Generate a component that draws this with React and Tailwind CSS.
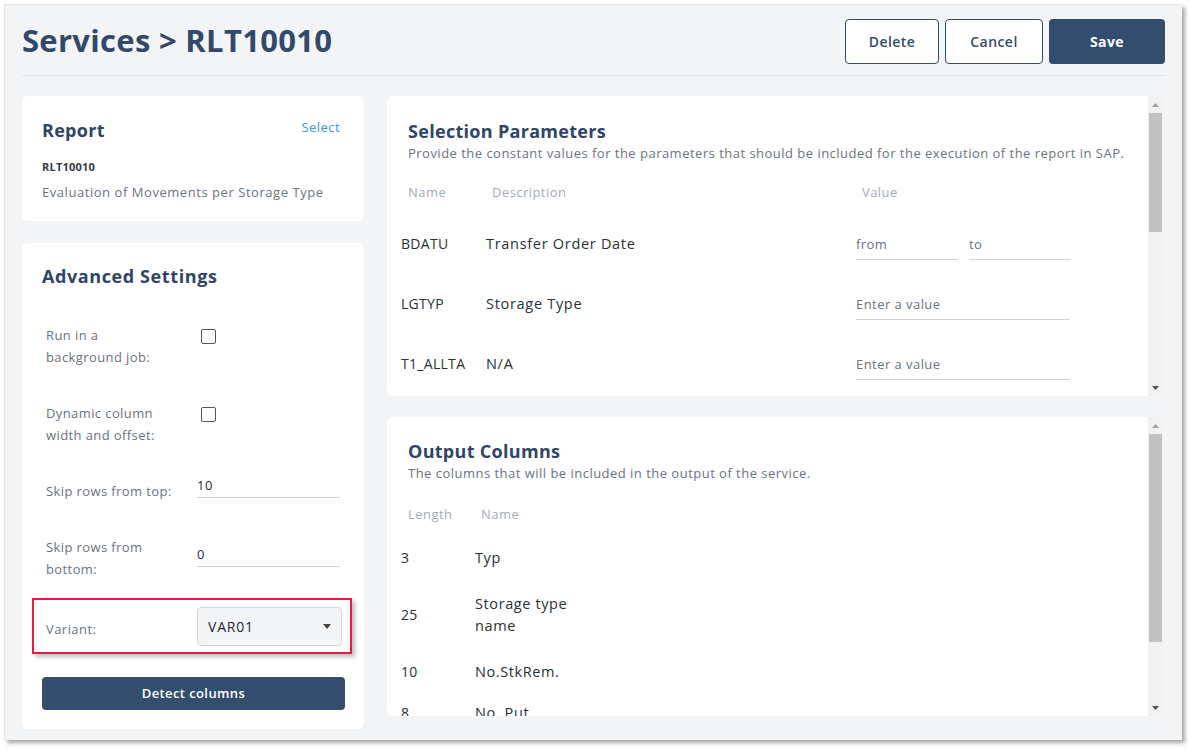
import React from "react";

const font = { fontFamily: '"Open Sans", "Noto Sans", sans-serif' };

function Caret({ up }) {
  return (
    <svg width="7" height="4" viewBox="0 0 7 4" className="block">
      {up ? <path d="M0 4 L3.5 0 L7 4 Z" fill="#a3a3a3" /> : <path d="M0 0 L3.5 4 L7 0 Z" fill="#505050" />}
    </svg>
  );
}

function ScrollBar({ thumbH }) {
  return (
    <div className="w-[15px] shrink-0 bg-[#f1f1f1] flex flex-col">
      <div className="h-[17px] flex items-center justify-center">
        <Caret up />
      </div>
      <div className="bg-[#c1c1c1] mx-px" style={{ height: thumbH }} />
      <div className="flex-1" />
      <div className="h-[17px] flex items-center justify-center">
        <Caret />
      </div>
    </div>
  );
}

function Field({ label, children, pt }) {
  return (
    <div className={`flex ${pt}`}>
      <div className="w-[151px] text-[13px] leading-[22px] text-[#6b7280] tracking-[0.4px]">{label}</div>
      <div className="flex-1">{children}</div>
    </div>
  );
}

export default function App() {
  return (
    <div className="w-[1191px] h-[749px] bg-white overflow-hidden tracking-[0.45px]" style={font}>
      <div className="ml-[4px] mt-[4px] w-[1178px] h-[736px] bg-[#f3f4f6] border-l border-t border-[#e5e7eb] shadow-[3px_3px_4px_rgba(0,0,0,0.35)] px-[17px] overflow-hidden">
        {/* header */}
        <div className="flex items-center justify-between h-[71px] border-b border-[#e3e5e8]">
          <h1 className="text-[31px] font-bold text-[#32496b] tracking-[0.3px] leading-none mt-[1px]">
            Services &gt; RLT10010
          </h1>
          <div className="flex gap-[6px] mt-[2px]">
            <button className="w-[94px] h-[45px] border border-[#334d6e] rounded-[4px] bg-white text-[14px] font-semibold text-[#334d6e]">
              Delete
            </button>
            <button className="w-[98px] h-[45px] border border-[#334d6e] rounded-[4px] bg-white text-[14px] font-semibold text-[#334d6e]">
              Cancel
            </button>
            <button className="w-[116px] h-[45px] rounded-[4px] bg-[#334d6e] text-[14px] font-bold text-white">
              Save
            </button>
          </div>
        </div>

        <div className="flex gap-[23px] pt-[20px]">
          {/* left column */}
          <div className="w-[342px] flex flex-col gap-[22px]">
            <div className="bg-white rounded-[6px] h-[125px] px-[20px] pt-[22px]">
              <div className="flex justify-between">
                <div className="text-[18px] font-bold text-[#2f4566] leading-[24px] tracking-[0.3px]">Report</div>
                <div className="text-[13px] text-[#3b95e6] leading-[16px] mt-[1px] mr-[4px]">Select</div>
              </div>
              <div className="text-[11px] font-bold text-[#2f3a4a] mt-[18px] leading-[14px] tracking-[0.2px]">RLT10010</div>
              <div className="text-[13px] text-[#6b7280] mt-[9px] leading-[18px] tracking-[0.55px]">
                Evaluation of Movements per Storage Type
              </div>
            </div>

            <div className="bg-white rounded-[6px] h-[486px] px-[20px] pt-[21px]">
              <div className="text-[18px] font-bold text-[#2f4566] leading-[24px] tracking-[0.6px]">Advanced Settings</div>
              <div className="px-[4px]">
                <Field label={<>Run in a<br />background job:</>} pt="pt-[36px]">
                  <div className="w-[15px] h-[15px] border border-[#555] rounded-[2px] mt-[5px] ml-[4px]" />
                </Field>
                <Field label={<>Dynamic column<br />width and offset:</>} pt="pt-[34px]">
                  <div className="w-[15px] h-[15px] border border-[#555] rounded-[2px] mt-[5px] ml-[4px]" />
                </Field>
                <Field label="Skip rows from top:" pt="pt-[34px]">
                  <div className="border-b border-[#cfd3d8] h-[24px] -mt-[6px] text-[13px] leading-[22px] text-[#1f2937]">10</div>
                </Field>
                <Field label={<>Skip rows from<br />bottom:</>} pt="pt-[34px]">
                  <div className="border-b border-[#cfd3d8] h-[25px] mt-[6px] text-[13px] leading-[24px] text-[#1f2937]">0</div>
                </Field>
              </div>
              <div className="-ml-[10px] -mr-[8px] mt-[18px] border-2 border-[#e11d48] shadow-[3px_3px_4px_rgba(0,0,0,0.25)] h-[56px] flex items-center pl-[12px] pr-[8px]">
                <div className="w-[151px] text-[13px] text-[#6b7280] pt-[8px]">Variant:</div>
                <div className="flex-1 h-[39px] bg-[#f3f4f6] border border-[#d4d7db] rounded-[4px] flex items-center justify-between pl-[10px] pr-[10px]">
                  <span className="text-[14px] text-[#1f2937] tracking-[0.8px]">VAR01</span>
                  <svg width="8" height="5" viewBox="0 0 8 5"><path d="M0 0 L4 5 L8 0 Z" fill="#444" /></svg>
                </div>
              </div>
              <button className="mt-[23px] w-[303px] h-[33px] rounded-[4px] bg-[#334d6e] text-white text-[13px] font-semibold tracking-[0.4px]">
                Detect columns
              </button>
            </div>
          </div>

          {/* right column */}
          <div className="w-[776px] flex flex-col gap-[21px]">
            <div className="bg-white rounded-[6px] h-[300px] flex overflow-hidden">
              <div className="flex-1 overflow-hidden pt-[23px]">
                <div className="pl-[21px] text-[18px] font-bold text-[#2f4566] leading-[24px] tracking-[0.3px]">Selection Parameters</div>
                <div className="pl-[21px] text-[13px] text-[#6b7280] leading-[18px] mt-[1px] whitespace-nowrap tracking-[0.48px]">
                  Provide the constant values for the parameters that should be included for the execution of the report in SAP.
                </div>
                <div className="flex pl-[21px] text-[13px] text-[#a3aab5] mt-[21px] leading-[18px]">
                  <div className="w-[84px]">Name</div>
                  <div className="w-[370px]">Description</div>
                  <div>Value</div>
                </div>
                {[
                  ["BDATU", "Transfer Order Date", true],
                  ["LGTYP", "Storage Type", false],
                  ["T1_ALLTA", "N/A", false],
                ].map(([n, d, range], i) => (
                  <div key={n} className={`flex pl-[14px] h-[60px] items-start ${i === 0 ? "mt-[32px]" : ""}`}>
                    <div className="w-[85px] text-[14px] text-[#2a2f36] leading-[20px] pt-[1px] tracking-[0.3px]">{n}</div>
                    <div className="w-[370px] text-[14.5px] text-[#2a2f36] leading-[20px] pt-[1px] tracking-[0.7px]">{d}</div>
                    {range ? (
                      <div className="flex gap-[11px]">
                        <div className="w-[102px] h-[27px] border-b border-[#cfd3d8] text-[13px] text-[#6b7280] leading-[20px] pt-[1px]">from</div>
                        <div className="w-[102px] h-[27px] border-b border-[#cfd3d8] text-[13px] text-[#6b7280] leading-[20px] pt-[1px]">to</div>
                      </div>
                    ) : (
                      <div className="w-[214px] h-[27px] border-b border-[#cfd3d8] text-[13px] text-[#6b7280] leading-[20px] pt-[1px]">Enter a value</div>
                    )}
                  </div>
                ))}
              </div>
              <ScrollBar thumbH={119} />
            </div>

            <div className="bg-white rounded-[6px] h-[299px] flex overflow-hidden">
              <div className="flex-1 overflow-hidden pt-[22px]">
                <div className="pl-[21px] text-[18px] font-bold text-[#2f4566] leading-[24px] tracking-[0.3px]">Output Columns</div>
                <div className="pl-[21px] text-[13px] text-[#6b7280] leading-[18px] mt-[1px] tracking-[0.48px]">
                  The columns that will be included in the output of the service.
                </div>
                <div className="flex pl-[21px] text-[13px] text-[#a3aab5] mt-[23px] leading-[18px]">
                  <div className="w-[73px]">Length</div>
                  <div>Name</div>
                </div>
                {[
                  ["3", <>Typ</>],
                  ["25", <>Storage type<br />name</>],
                  ["10", <>No.StkRem.</>],
                ].map(([l, n], i) => (
                  <div key={i} className={`flex pl-[14px] h-[57px] items-center ${i === 0 ? "mt-[6px]" : ""}`}>
                    <div className="w-[74px] text-[14px] text-[#2a2f36] leading-[22px] tracking-[0.3px]">{l}</div>
                    <div className="text-[14.5px] text-[#2a2f36] leading-[22px] tracking-[0.6px]">{n}</div>
                  </div>
                ))}
                <div className="flex pl-[14px] pt-[2px]">
                  <div className="w-[74px] text-[14px] text-[#2a2f36] leading-[22px] tracking-[0.3px]">8</div>
                  <div className="text-[14.5px] text-[#2a2f36] leading-[22px] tracking-[0.6px]">No. Put.</div>
                </div>
              </div>
              <ScrollBar thumbH={208} />
            </div>
          </div>
        </div>
      </div>
    </div>
  );
}
